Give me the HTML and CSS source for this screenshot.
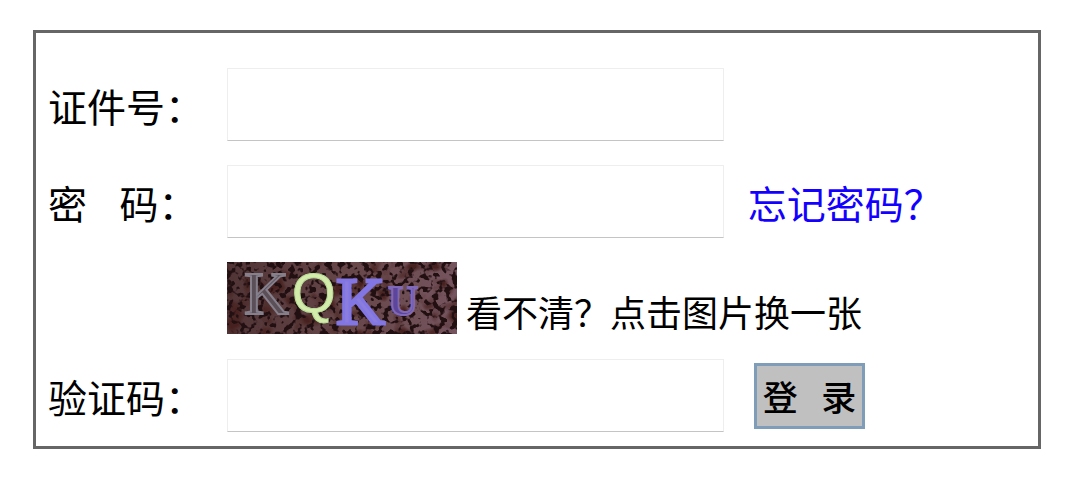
FILE: index.html
```html
<!DOCTYPE html>
<html lang="zh-CN">
<head>
  <meta charset="UTF-8">
  <meta name="viewport" content="width=device-width, initial-scale=1.0">
  <title>登录</title>
  <link rel="stylesheet" href="styles.css">
</head>
<body>
  <form class="login-form">
    <label for="card-id">证件号：</label>
    <input id="card-id" type="text">

    <label for="password" class="row-start">密&nbsp;&nbsp;&nbsp;码：</label>
    <input id="password" type="password">
    <a class="forgot" href="#">忘记密码？</a>

    <div class="captcha-row">
      <button type="button" class="captcha" aria-label="换一张">
        <svg viewBox="0 0 230 72" aria-hidden="true">
          <defs>
            <filter id="specks" x="0" y="0" width="100%" height="100%" color-interpolation-filters="sRGB">
              <feTurbulence type="fractalNoise" baseFrequency="0.16" numOctaves="2" seed="7"/>
              <feColorMatrix values="0 0 0 0 0.13  0 0 0 0 0.06  0 0 0 0 0.07  10 0 0 0 -5.1"/>
            </filter>
            <filter id="stains" x="0" y="0" width="100%" height="100%" color-interpolation-filters="sRGB">
              <feTurbulence type="fractalNoise" baseFrequency="0.06" numOctaves="2" seed="3"/>
              <feColorMatrix values="0 0 0 0 0.28  0 0 0 0 0.13  0 0 0 0 0.12  0 4 0 0 -2"/>
            </filter>
            <linearGradient id="shade">
              <stop offset="0" stop-color="#503436"/>
              <stop offset="0.5" stop-color="#664648"/>
              <stop offset="1" stop-color="#75545f"/>
            </linearGradient>
          </defs>
          <rect width="230" height="72" fill="url(#shade)"/>
          <rect width="230" height="72" filter="url(#stains)"/>
          <rect width="230" height="72" filter="url(#specks)"/>
          <text class="letter-a" x="17" y="52">K</text>
          <text class="letter-b" x="65" y="50">Q</text>
          <text class="letter-c" x="109" y="62">K</text>
          <text class="letter-d" x="161" y="53">U</text>
        </svg>
      </button>
      <span class="hint">看不清？点击图片换一张</span>
    </div>

    <label for="code" class="row-start">验证码：</label>
    <input id="code" type="text">
    <button type="submit" class="submit">登&nbsp;&nbsp;&nbsp;录</button>
  </form>
</body>
</html>
```

FILE: styles.css
```css
* {
  box-sizing: border-box;
}

body {
  margin: 30px 39px 30px 33px;
  background: #fff;
  color: #000;
  font-family: "Liberation Sans", "Noto Sans CJK SC", sans-serif;
}

.login-form {
  display: grid;
  grid-template-columns: 179px 49fr 31fr;
  grid-auto-rows: minmax(73px, auto);
  row-gap: 24px;
  align-items: center;
  padding: 35px 0 14px 12px;
  border: 3px solid #666;
}

label,
.forgot {
  padding-top: 8px;
  font-size: 39px;
  line-height: 48px;
  white-space: nowrap;
}

.row-start {
  grid-column: 1;
}

input {
  width: 100%;
  height: 73px;
  padding: 0 12px;
  border: 1px solid #eee;
  border-bottom-color: #c4c4c4;
  background: #fff;
  font-family: inherit;
  font-size: 36px;
}

.forgot {
  margin-left: 24px;
  color: #1400ff;
  text-decoration: none;
}

.captcha-row {
  grid-column: 2 / 4;
  align-self: start;
  display: flex;
  align-items: flex-end;
  gap: 9px;
}

.captcha {
  width: 230px;
  padding: 0;
  border: none;
  background: none;
  cursor: pointer;
}

.captcha svg {
  display: block;
  width: 100%;
  overflow: visible;
}

.letter-a,
.letter-c,
.letter-d {
  font-family: "Liberation Serif", serif;
}

.letter-a {
  fill: #5c5058;
  stroke: #85808c;
  stroke-width: 2;
  font-size: 62px;
}

.letter-b {
  fill: #d3ecab;
  stroke: #b9df98;
  stroke-width: 1;
  font-family: "Liberation Sans", sans-serif;
  font-size: 56px;
}

.letter-c {
  fill: #8a7ddd;
  stroke: #8176e4;
  stroke-width: 3;
  font-size: 68px;
}

.letter-d {
  fill: #5d469a;
  stroke: #8069b8;
  stroke-width: 2;
  font-size: 42px;
  font-weight: bold;
}

.hint {
  font-size: 36px;
  line-height: 38px;
  white-space: nowrap;
}

.submit {
  justify-self: start;
  margin-left: 30px;
  padding: 6px;
  border: 3px solid #7f9db9;
  background: #c0c0c0;
  color: #000;
  font-family: "Noto Sans CJK SC", sans-serif;
  font-size: 35px;
  font-weight: 500;
  line-height: 48px;
  cursor: pointer;
}
```
